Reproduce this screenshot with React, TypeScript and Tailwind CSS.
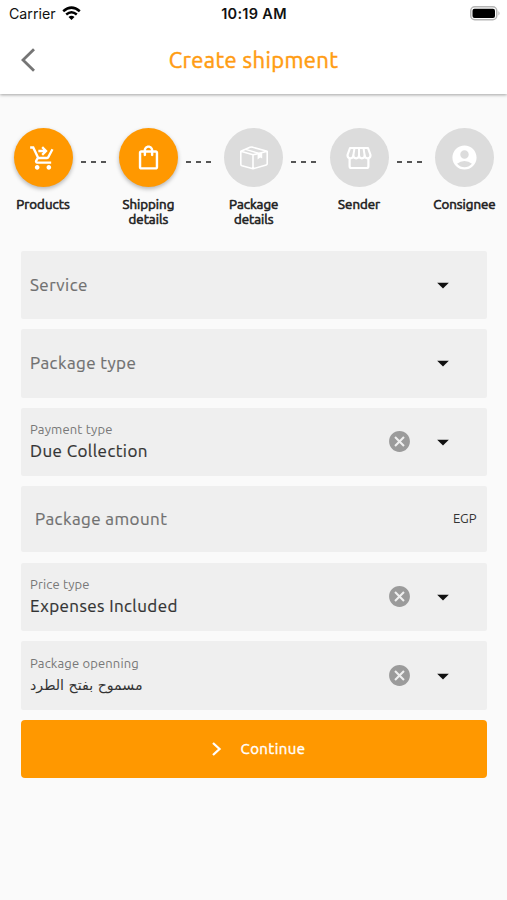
import type { ReactNode } from "react";
import {
  MdShoppingCartCheckout,
  MdOutlineShoppingBag,
  MdAccountCircle,
  MdCancel,
  MdArrowDropDown,
} from "react-icons/md";

function BoxIcon() {
  return (
    <svg width="30" height="26" viewBox="0 0 30 26" fill="none" stroke="white" strokeWidth="1.6" strokeLinejoin="round">
      <path d="M1.800 6.300 14 9.800V23.800L3 20.800q-1.200-.4-1.200-1.600zM14 9.800 28.200 6.300V18.700q0 1-1 1.300L14 23.800M1.800 6.300 11 2.300q1-.4 2-.2L28.200 6.300" />
      <path d="M6.500 4.400 19.500 8.200" strokeWidth="1.300" />
      <path d="m18.600 8.500 4.600-1.100v6.200l-2-1-2.600 2z" fill="white" stroke="none" />
    </svg>
  );
}

function StoreIcon() {
  return (
    <svg width="26" height="24" viewBox="0 0 26 24" fill="none" stroke="white" strokeWidth="2.200" strokeLinejoin="round">
      <path d="M3.600 12v8.200q0 1.800 1.800 1.800h15.200q1.800 0 1.800-1.800V12" />
      <path d="M4 2h18l2.500 7q0 3.300-2.900 3.300-2.900 0-2.900-2.700 0 2.700-2.850 2.700Q13 12.300 13 9.600q0 2.700-2.850 2.700-2.850 0-2.850-2.700 0 2.700-2.900 2.700-2.900 0-2.900-3.300z" />
      <path d="M7.300 9.600 8.500 2M13 9.600V2M18.700 9.600 17.500 2" strokeWidth="2" />
    </svg>
  );
}

function Step({ icon, label, active }: { icon: ReactNode; label: string; active?: boolean }) {
  return (
    <div className="flex w-[59px] shrink-0 flex-col items-center">
      <div
        className={`flex h-[59px] w-[59px] items-center justify-center rounded-full text-white ${
          active ? "bg-[#ff9800] shadow-[0_2px_4px_rgba(0,0,0,0.28)]" : "bg-[#dcdcdc]"
        }`}
      >
        {icon}
      </div>
      <div className="mt-[11px] w-[70px] text-center text-[13.300px] leading-[14.500px] font-normal text-[#222] [-webkit-text-stroke:0.6px_#222]">
        {label}
      </div>
    </div>
  );
}

function Dashes() {
  return (
    <div className="relative -left-[2.500px] mt-[33px] flex w-[25px] shrink-0 justify-between">
      <i className="h-[2px] w-[5px] bg-[#555]" />
      <i className="h-[2px] w-[5px] bg-[#555]" />
      <i className="h-[2px] w-[5px] bg-[#555]" />
    </div>
  );
}

function SelectField({ children, clearable }: { children: ReactNode; clearable?: boolean }) {
  return (
    <div className="flex h-[68.400px] items-center rounded-[2px] bg-[#efefef] pr-[29.500px] pl-[9.500px]">
      <div className="flex flex-1 flex-col">{children}</div>
      {clearable && <MdCancel className="mr-[17px] text-[#9b9b9b]" size={25} />}
      <MdArrowDropDown className="text-[#111]" size={28} />
    </div>
  );
}

const caption = "text-[13px] leading-[18px] tracking-[0.150px] text-[#777] whitespace-nowrap -mt-px mb-px";
const value = "text-[17px] leading-[24px] tracking-[0.420px] text-[#333] whitespace-nowrap [-webkit-text-stroke:0.2px_#333]";
const placeholder =
  "text-[17px] leading-[24px] tracking-[0.420px] text-[#707070] whitespace-nowrap [-webkit-text-stroke:0.2px_#707070]";

export default function App() {
  return (
    <div className="flex h-[900px] w-[507px] flex-col overflow-hidden bg-[#fafafa] font-['Ubuntu','Noto_Sans',sans-serif]">
      <header className="z-10 h-[94px] shrink-0 bg-white shadow-[0_1px_3px_rgba(0,0,0,0.35)]">
        <div className="grid h-[27px] grid-cols-[1fr_auto_1fr] items-center pr-[6px] pl-[9px] font-['Inter',sans-serif] text-[#111]">
          <div className="flex items-center gap-[6px] text-[14.200px]">
            <span>Carrier</span>
            <svg width="19" height="15" viewBox="0 0 19 15" fill="none" stroke="black" strokeWidth="2.500">
              <path d="M1.200 5.200Q9.500-2 17.800 5.200M4.200 8.500q5.300-4.500 10.600 0" />
              <path d="M9.500 14 6.500 11q3-2.400 6 0z" fill="black" stroke="none" />
            </svg>
          </div>
          <span className="-ml-[2px] text-center text-[14.500px] font-semibold tracking-[0.300px] whitespace-nowrap">10:19 AM</span>
          <svg className="justify-self-end" width="31" height="15" viewBox="0 0 31 15">
            <rect x=".75" y=".75" width="26" height="13" rx="4" fill="white" stroke="#b5b5b5" strokeWidth="1.500" />
            <rect x="2.500" y="2.700" width="22.500" height="9.200" rx="2" fill="black" />
            <path d="M28.500 5q2 2.300 0 4.600z" fill="#aaa" />
          </svg>
        </div>
        <div className="grid h-[66px] grid-cols-[60px_1fr_60px] items-center">
          <svg className="ml-[20px]" width="16" height="24" viewBox="0 0 16 24" fill="none" stroke="#757575" strokeWidth="2.800">
            <path d="M14 1.200 3 12l11 10.800" />
          </svg>
          <h1 className="-mt-[2px] text-center text-[22px] font-normal tracking-[0.400px] text-[#ff9c12] [-webkit-text-stroke:0.5px_#ff9c12]">
            Create shipment
          </h1>
        </div>
      </header>

      <div className="mt-[34px] flex h-[122px] shrink-0 justify-between pr-[13px] pl-[13.500px]">
        <Step active label="Products" icon={<MdShoppingCartCheckout size={28} />} />
        <Dashes />
        <Step active label="Shipping details" icon={<MdOutlineShoppingBag size={29} />} />
        <Dashes />
        <Step label="Package details" icon={<BoxIcon />} />
        <Dashes />
        <Step label="Sender" icon={<StoreIcon />} />
        <Dashes />
        <Step label="Consignee" icon={<MdAccountCircle size={29} />} />
      </div>

      <main className="mx-[20.500px] mt-[0.500px] flex flex-col gap-[10.250px]">
        <SelectField>
          <span className={placeholder}>Service</span>
        </SelectField>
        <SelectField>
          <span className={placeholder}>Package type</span>
        </SelectField>
        <SelectField clearable>
          <span className={caption}>Payment type</span>
          <span className={value}>Due Collection</span>
        </SelectField>
        <div className="flex h-[66px] items-center justify-between rounded-[2px] bg-[#efefef] pr-[10px] pb-px pl-[14.500px]">
          <span className={placeholder}>Package amount</span>
          <span className="text-[13px] text-[#333]">EGP</span>
        </div>
        <SelectField clearable>
          <span className={caption}>Price type</span>
          <span className={value}>Expenses Included</span>
        </SelectField>
        <SelectField clearable>
          <span className={caption}>Package openning</span>
          <span className="self-start font-['DejaVu_Sans',sans-serif] text-[14.200px] leading-[24px] whitespace-nowrap text-[#333]" dir="rtl">
            مسموح بفتح الطرد
          </span>
        </SelectField>
        <button className="flex h-[58.500px] items-center rounded-[4px] bg-[#ff9800] pl-[190px] text-white">
          <svg width="12" height="16" viewBox="0 0 12 16" fill="none" stroke="white" strokeWidth="2.300">
            <path d="m2 2 6.500 6L2 14" />
          </svg>
          <span className="mt-px ml-[18px] text-[15px] font-normal tracking-[0.450px] [-webkit-text-stroke:0.4px_white]">Continue</span>
        </button>
      </main>
    </div>
  );
}
